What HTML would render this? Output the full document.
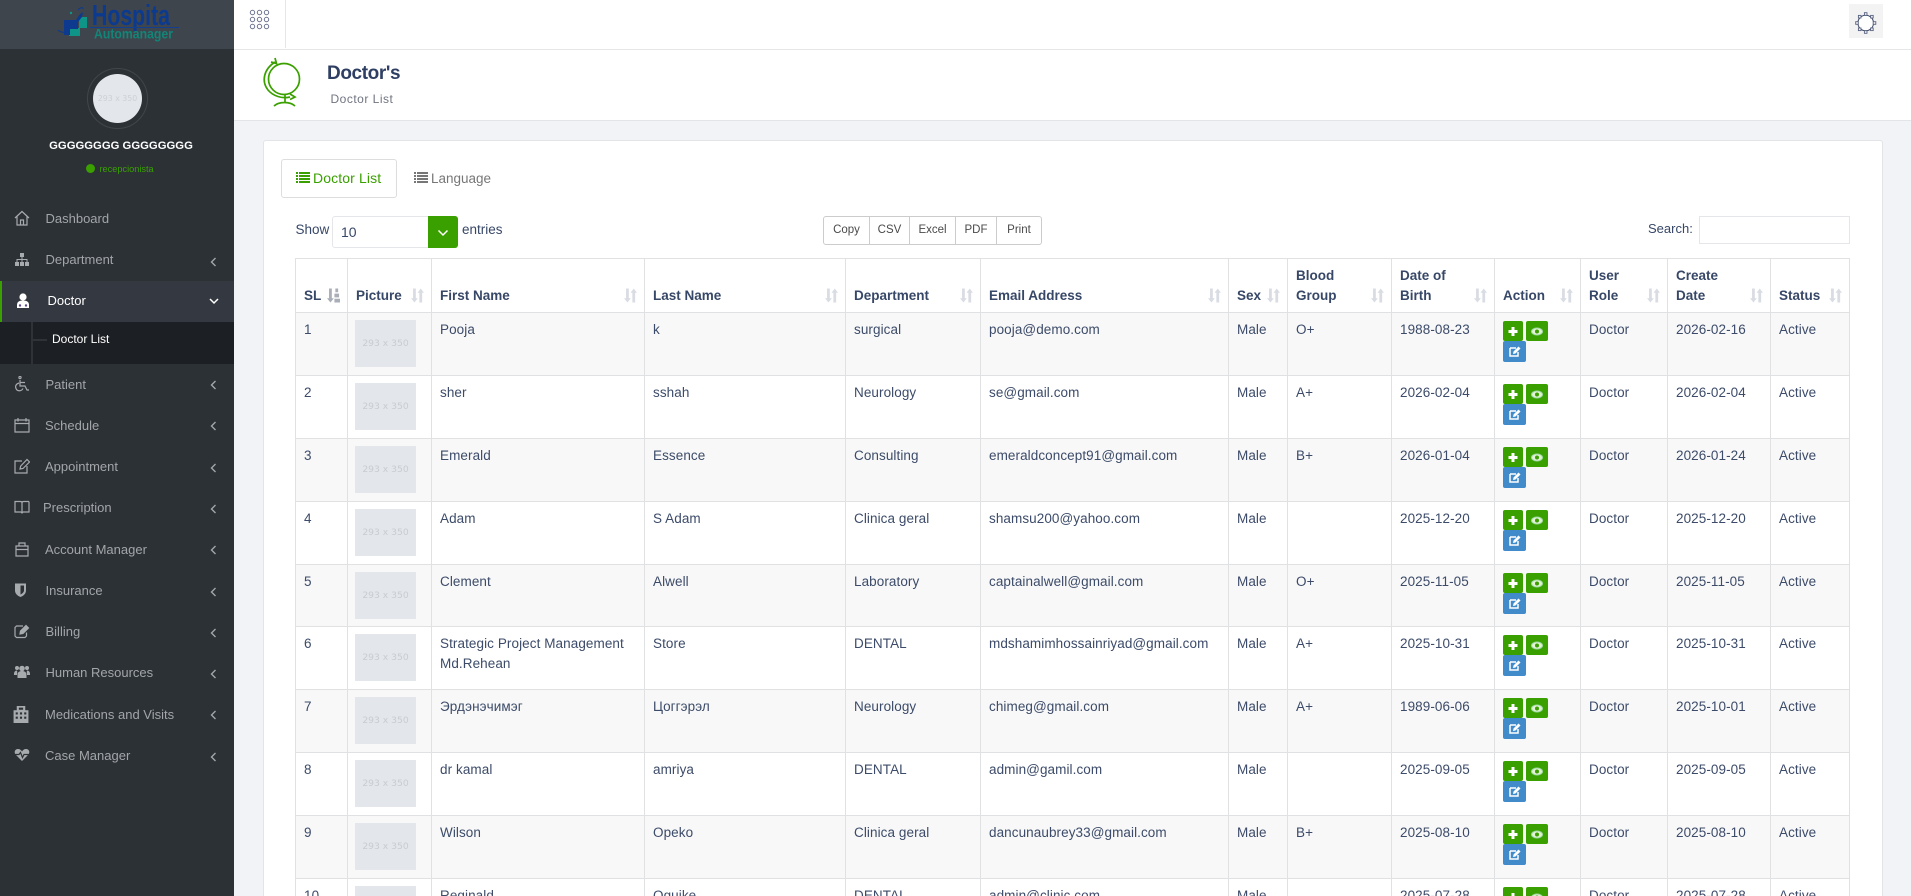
<!DOCTYPE html>
<html lang="en"><head><meta charset="utf-8"><title>Doctor List</title>
<style>
*{box-sizing:border-box}
html,body{margin:0;padding:0;width:1911px;height:896px;overflow:hidden;background:#f1f3f6;font-family:"Liberation Sans",sans-serif;color:#374767}
#w{position:relative;width:1911px;height:896px;overflow:hidden;background:#f1f3f6}
.a{position:absolute}
#side{position:absolute;left:0;top:0;width:234px;height:896px;background:#2c3136}
#logo{position:absolute;left:0;top:0;width:234px;height:49px;background:#3f454c}
.mi{position:absolute;height:20px;line-height:20px;font-size:13px;color:#a3a6a9;white-space:nowrap}
.ic{position:absolute;left:14px;width:16px;height:16px;fill:none;stroke:#a8abae;stroke-width:1.2}
.ic.f{fill:#a8abae;stroke:none}
.ch{position:absolute;left:210px;width:7px;height:10px;fill:none;stroke:#a3a6a9;stroke-width:1.4}
#tb{position:absolute;left:234px;top:0;width:1677px;height:50px;background:#fff;border-bottom:1px solid #e5e6e8}
#ch{position:absolute;left:234px;top:50px;width:1677px;height:71px;background:#fff;border-bottom:1px solid #e2e4e8}
#card{position:absolute;left:263px;top:140px;width:1620px;height:756px;background:#fff;border:1px solid #e2e4e7;border-bottom:0;border-radius:3px 3px 0 0}
.btn{position:absolute;top:216px;height:29px;line-height:27px;border:1px solid #ccc;border-left:0;background:#fff;text-align:center;font-size:11.5px;color:#4a4a4a}
table{position:absolute;left:295px;top:258px;border-collapse:separate;border-spacing:0;table-layout:fixed;width:1554px;border-left:1px solid #e0e1e3;border-top:1px solid #e0e1e3;font-size:13.5px;line-height:19.5px;color:#3c4b69}
th,td{border-right:1px solid #e0e1e3;border-bottom:1px solid #e0e1e3;padding:7px 7px 0 8px;vertical-align:top;text-align:left;position:relative;overflow:visible}
td{letter-spacing:.08px}
thead tr{height:54px}
th{vertical-align:bottom;padding-bottom:7px;padding-top:0;font-weight:bold;color:#374767}
tbody tr{height:63px}
tbody tr.x{height:62px}
tbody tr.y{height:18px}
tr.y td{height:18px;overflow:hidden;border-bottom:0}
tr.y td div{height:11px;overflow:hidden}
tbody tr:nth-child(odd) td{background:#f8f8f8}
.s{position:absolute;right:7px;bottom:9px;width:13px;height:15px;fill:#d9dde3}
.ph{display:block;position:absolute;left:7px;top:7px;width:61px;height:47px;background:#e3e6ea;color:#c8ccd2;font:9.2px/47px "DejaVu Sans",sans-serif;letter-spacing:0;text-align:center;overflow:hidden}
.ba{position:absolute;left:8px;top:7.5px;width:20px;height:20px;background:#3aa000;border-radius:2px}
.bb{position:absolute;left:31px;top:7.5px;width:22px;height:20px;background:#3aa000;border-radius:2px}
.bc{position:absolute;left:8px;top:28px;width:23px;height:21px;background:#428bca;border-radius:2px}
.ba svg,.bb svg,.bc svg{position:absolute;left:0;top:0}
</style></head><body>
<div id="w">
<svg width="0" height="0" style="position:absolute"><defs>
<g id="so"><path d="M2.200 0h3v10.500h2.200L3.700 15 0 10.500h2.200z"/><path d="M9 15h3V4.500h2L10.500 0 7 4.500h2z"/></g>
<g id="pl"><path d="M8.500 6h3v3h3v3h-3v3h-3v-3h-3V9h3z" fill="#fff"/></g>
<g id="ey"><ellipse cx="11" cy="10.500" rx="5.500" ry="3.500" fill="#e4f3d5" stroke="#9fd9a5"/><circle cx="11" cy="10.500" r="2" fill="#3aa000"/></g>
<g id="ed"><path d="M7 7h6M7 7v8h8v-4" fill="none" stroke="#fff" stroke-width="1.500"/><path d="M10 13l.5-2.500 5-5 2 2-5 5z" fill="#fff"/></g>
<path id="cl" d="M5.500 1L1.500 5l4 4"/>
</defs></svg>

<div id="side">
<div id="logo"><svg width="234" height="49" viewBox="0 0 234 49">
<path d="M79 17h8v11h-7v8H69v-8h10z" fill="#0f9488"/>
<path d="M64 20h12l4-6 3-2-1 5-4 5v7H70v6h-6z" fill="#0d3a8e"/>
<path d="M58 30c3 3 8 3 11 1" fill="none" stroke="#0d3a8e" stroke-width="1"/>
<path d="M78 10c3-3 5-3 5-1" fill="none" stroke="#0d3a8e" stroke-width="1"/>
<circle cx="71" cy="13" r="1.200" fill="#0f9488"/>
<text x="92" y="25" font-family="Liberation Sans,sans-serif" font-weight="bold" font-size="29" fill="#0c3a8e" textLength="78" lengthAdjust="spacingAndGlyphs">Hospita</text>
<rect x="90" y="27" width="89" height="1" fill="#123f8e"/>
<text x="94" y="38.500" font-family="Liberation Sans,sans-serif" font-size="14" font-weight="bold" fill="#128578" textLength="79" lengthAdjust="spacingAndGlyphs">Automanager</text>
</svg></div>

<div class="a" style="left:87px;top:68px;width:61px;height:61px;border-radius:50%;border:1px solid #41464b"></div>
<div class="a" style="left:93px;top:74px;width:49px;height:49px;border-radius:50%;background:#e3e6ea;color:#cdd1d7;font:7.8px/49px 'DejaVu Sans',sans-serif;text-align:center;white-space:nowrap">293 x 350</div>
<div class="a" style="left:4px;width:234px;top:137px;text-align:center;font-weight:bold;color:#fff;font-size:11.300px;line-height:18px;white-space:nowrap">GGGGGGGG GGGGGGGG</div>
<div class="a" style="left:86px;top:164px;width:9px;height:9px;border-radius:50%;background:#3aa000"></div>
<div class="a" style="left:99.500px;top:162px;color:#3aa000;font-size:9.200px;line-height:14px">recepcionista</div>

<div class="mi" style="left:45.500px;top:209px">Dashboard</div>
<svg class="ic" style="top:210px" viewBox="0 0 16 16"><path d="M1 8L8 1.500 15 8M3 6.500V15h10V6.500M6.500 15v-5h3v5"/></svg>

<div class="mi" style="left:45.500px;top:250px">Department</div>
<svg class="ic f" style="top:252px" viewBox="0 0 16 16"><path d="M6 1h4v4H8.500v2H13.500v3H15v4h-4v-4h1.500V8h-4v2H10v4H6v-4h1.500V8h-4v2H5v4H1v-4h1.500V7h5V5H6z"/></svg>
<svg class="ch" style="top:257px" viewBox="0 0 7 10"><use href="#cl"/></svg>

<div class="a" style="left:0;top:281px;width:234px;height:41px;background:#343840;border-left:2px solid #3aa000"></div>
<div class="mi" style="left:47.500px;top:291px;color:#fff;font-size:13px">Doctor</div>
<svg class="ic f" style="top:293px;left:15px;fill:#fff" viewBox="0 0 14 16"><circle cx="7" cy="4" r="3.600"/><path d="M1 15v-3c0-3 2-4.500 6-4.500s6 1.500 6 4.500v3z"/><circle cx="4" cy="12.500" r="1.200" fill="#5b4a90"/><circle cx="10" cy="12.500" r="1.200" fill="#5b4a90"/></svg>
<svg class="a" style="left:209px;top:298px;fill:none;stroke:#fff;stroke-width:1.500" width="10" height="7" viewBox="0 0 10 7"><path d="M1 1l4 4 4-4"/></svg>

<div class="a" style="left:0;top:322px;width:234px;height:42px;background:#1c1f23"></div>
<div class="a" style="left:31px;top:322px;width:2px;height:42px;background:#2f3338"></div>
<div class="a" style="left:32px;top:339px;width:15px;height:2px;background:#2f3338"></div>
<div class="mi" style="left:52px;top:329px;color:#fff;font-size:12px">Doctor List</div>

<div class="mi" style="left:45.500px;top:375px">Patient</div>
<svg class="ic" style="top:376px" viewBox="0 0 16 16"><circle cx="6" cy="1.500" r="1.100"/><path d="M6 4v6h5l2 4h2M5 7c-3 1-4 3-3 5.500S7 16 9 12.500M6 6.500h5"/></svg>
<svg class="ch" style="top:380px" viewBox="0 0 7 10"><use href="#cl"/></svg>

<div class="mi" style="left:45px;top:416px">Schedule</div>
<svg class="ic" style="top:417px" viewBox="0 0 16 16"><path d="M1 3h14v12H1zM1 6.500h14M4 1v3.500M12 1v3.500"/></svg>
<svg class="ch" style="top:421px" viewBox="0 0 7 10"><use href="#cl"/></svg>

<div class="mi" style="left:45px;top:457px">Appointment</div>
<svg class="ic" style="top:458px" viewBox="0 0 16 16"><path d="M8 3H1v12h12V8M6 11l.7-3L13 1.500l2.500 2.500L9 10.500z"/></svg>
<svg class="ch" style="top:463px" viewBox="0 0 7 10"><use href="#cl"/></svg>

<div class="mi" style="left:43px;top:498px">Prescription</div>
<svg class="ic" style="top:499px" viewBox="0 0 16 16"><path d="M1 2.500h5.500c1 0 1.500.5 1.500 1.500v10.500c0-1-.5-1.500-1.500-1.500H1zM15 2.500H9.500c-1 0-1.500.5-1.500 1.500M15 2.500V13H9.500c-1 0-1.500.5-1.500 1.500"/></svg>
<svg class="ch" style="top:504px" viewBox="0 0 7 10"><use href="#cl"/></svg>

<div class="mi" style="left:45px;top:540px">Account Manager</div>
<svg class="ic" style="top:541px" viewBox="0 0 16 16"><path d="M2 5h12v10H2zM2 8.500h12M5 5V2h6v3"/></svg>
<svg class="ch" style="top:545px" viewBox="0 0 7 10"><use href="#cl"/></svg>

<div class="mi" style="left:45.500px;top:581px">Insurance</div>
<svg class="ic f" style="top:582px;left:13px" viewBox="0 0 16 16"><path d="M2 1.500h11v7c0 3-2.500 5.500-5.500 6.500C4.500 14 2 11.500 2 8.500z"/><path d="M7.500 3.500h3.500v5c0 1.500-1.500 3-3.500 4z" fill="#2c3136"/></svg>
<svg class="ch" style="top:587px" viewBox="0 0 7 10"><use href="#cl"/></svg>

<div class="mi" style="left:45.500px;top:622px">Billing</div>
<svg class="ic" style="top:623px" viewBox="0 0 16 16"><path d="M9 3H2.500L1 4.500V13l1.500 1.500H11L12.500 13V9.500"/><path d="M6 11l.5-3L12 2.500 14.500 5 9 10.500z" fill="#a8abae"/></svg>
<svg class="ch" style="top:628px" viewBox="0 0 7 10"><use href="#cl"/></svg>

<div class="mi" style="left:45.500px;top:663px">Human Resources</div>
<svg class="ic f" style="top:664px;width:16px" viewBox="0 0 16 16"><circle cx="3" cy="4" r="2"/><circle cx="13" cy="4" r="2"/><circle cx="8" cy="4.500" r="2.800"/><path d="M0 10c0-2 1-3.500 3-3.500 0 0 .5 1 0 4.500H0zM16 10c0-2-1-3.500-3-3.500 0 0-.5 1 0 4.500h3zM3.500 14v-3c0-3 2-4 4.500-4s4.500 1 4.500 4v3z"/></svg>
<svg class="ch" style="top:669px" viewBox="0 0 7 10"><use href="#cl"/></svg>

<div class="mi" style="left:45px;top:705px">Medications and Visits</div>
<svg class="ic f" style="top:706px;left:13px;height:17px" viewBox="0 0 14 16"><path d="M3 0h8v4h3v12H0V4h3z"/><path d="M2 6h2v2H2zM6 6h2v2H6zM10 6h2v2h-2zM2 10h2v2H2zM6 10h2v2H6zM10 10h2v2h-2zM5 1.500h4v2H5z" fill="#2c3136"/></svg>
<svg class="ch" style="top:710px" viewBox="0 0 7 10"><use href="#cl"/></svg>

<div class="mi" style="left:45px;top:746px">Case Manager</div>
<svg class="ic f" style="top:747px" viewBox="0 0 16 16"><path d="M8 14L1.500 7.500C0 5.500.5 2 4 2c2 0 3 1 4 2.500C9 3 10 2 12 2c3.500 0 4 3.500 2.500 5.500z"/><path d="M1 7.500h4l1.500-2 2 5 1.500-3h5" fill="none" stroke="#2c3136" stroke-width="1.200"/></svg>
<svg class="ch" style="top:752px" viewBox="0 0 7 10"><use href="#cl"/></svg>
</div>

<div id="tb"></div>
<div class="a" style="left:285px;top:0;width:1px;height:48px;background:#e5e6e8"></div>
<svg class="a" style="left:249px;top:9px" width="22" height="21" viewBox="0 0 22 21" fill="none" stroke="#6d7290" stroke-width="1"><circle cx="3.500" cy="3.500" r="2.200"/><circle cx="10.500" cy="3.500" r="2.200"/><circle cx="17.500" cy="3.500" r="2.200"/><circle cx="3.500" cy="10.500" r="2.200"/><circle cx="10.500" cy="10.500" r="2.200"/><circle cx="17.500" cy="10.500" r="2.200"/><circle cx="3.500" cy="17.500" r="2.200"/><circle cx="10.500" cy="17.500" r="2.200"/><circle cx="17.500" cy="17.500" r="2.200"/></svg>
<div class="a" style="left:1849px;top:4px;width:34px;height:34px;background:#f3f3f3"></div>
<svg class="a" style="left:1849px;top:4px" width="34" height="34" viewBox="0 0 34 34" fill="#f3f3f3" stroke="#5a6383" stroke-width=".9"><circle cx="16.700" cy="19" r="7.800" fill="#fff" stroke="#3f4a66" stroke-width="1"/><rect x="15.400" y="8.700" width="2.600" height="2.600"/><rect x="15.400" y="26.700" width="2.600" height="2.600"/><rect x="6.700" y="17.700" width="2.600" height="2.600"/><rect x="24.200" y="17.700" width="2.600" height="2.600"/><rect x="9.400" y="11.400" width="2.600" height="2.600"/><rect x="21.600" y="11.400" width="2.600" height="2.600"/><rect x="9.400" y="24" width="2.600" height="2.600"/><rect x="21.600" y="24" width="2.600" height="2.600"/></svg>

<div id="ch"></div>
<svg class="a" style="left:261px;top:57px" width="42" height="51" viewBox="0 0 42 51" fill="none" stroke="#3aa000" stroke-width="1.700"><circle cx="23" cy="22" r="15.500"/><path d="M14 5C3 12 0 24 7 33c5 6 14 9 22 7"/><path d="M14 1l1.500 5.500L10 5M29 37l5 3-5 2.500" /><path d="M24 38v8M13 49c3-3 7-3.500 10.500-3.500S31 46 34 49"/></svg>
<div class="a" style="left:327px;top:61px;font-size:19px;line-height:26px;font-weight:bold;color:#2f3f63;letter-spacing:-.4px">Doctor's</div>
<div class="a" style="left:330.500px;top:91px;font-size:12px;line-height:16px;color:#6f7480;letter-spacing:.5px">Doctor List</div>

<div id="card"></div>
<div class="a" style="left:281px;top:159px;width:116px;height:39px;border:1px solid #ddd;border-radius:3px"></div>
<svg class="a" style="left:296px;top:172px" width="14" height="11" viewBox="0 0 14 11" fill="#3aa000"><path d="M0 0h2v2H0zM3 0h11v2H3zM0 3h2v2H0zM3 3h11v2H3zM0 6h2v2H0zM3 6h11v2H3zM0 9h2v2H0zM3 9h11v2H3z"/></svg>
<div class="a" style="left:313px;top:168px;font-size:14px;line-height:20px;color:#3aa000;letter-spacing:.12px">Doctor List</div>
<svg class="a" style="left:414px;top:172px" width="14" height="11" viewBox="0 0 14 11" fill="#777"><path d="M0 0h2v2H0zM3 0h11v2H3zM0 3h2v2H0zM3 3h11v2H3zM0 6h2v2H0zM3 6h11v2H3zM0 9h2v2H0zM3 9h11v2H3z"/></svg>
<div class="a" style="left:431px;top:169px;font-size:13.500px;line-height:20px;color:#777">Language</div>

<div class="a" style="left:295.500px;top:220px;font-size:13.500px;line-height:20px">Show</div>
<div class="a" style="left:332px;top:216px;width:126px;height:32px;border:1px solid #e4e6e9;border-radius:3px;font-size:14px;line-height:31px;padding-left:8px">10</div>
<div class="a" style="left:428px;top:216px;width:30px;height:32px;background:#3aa000;border-radius:0 3px 3px 0"></div>
<svg class="a" style="left:437px;top:229px;fill:none;stroke:#fff;stroke-width:1.500" width="12" height="8" viewBox="0 0 12 8"><path d="M1.500 1.500L6 6l4.500-4.500"/></svg>
<div class="a" style="left:462px;top:220px;font-size:13.500px;line-height:20px">entries</div>

<div class="btn" style="left:823px;width:47px;border-left:1px solid #ccc;border-radius:3px 0 0 3px">Copy</div>
<div class="btn" style="left:870px;width:40px">CSV</div>
<div class="btn" style="left:910px;width:46px">Excel</div>
<div class="btn" style="left:956px;width:41px">PDF</div>
<div class="btn" style="left:997px;width:45px;border-radius:0 3px 3px 0">Print</div>

<div class="a" style="left:1648px;top:219px;font-size:13px;line-height:20px">Search:</div>
<div class="a" style="left:1699px;top:216px;width:151px;height:28px;border:1px solid #e4e6e9"></div>

<table>
<colgroup><col style="width:52px"><col style="width:84px"><col style="width:213px"><col style="width:201px"><col style="width:135px"><col style="width:248px"><col style="width:59px"><col style="width:104px"><col style="width:103px"><col style="width:86px"><col style="width:87px"><col style="width:103px"><col style="width:79px"></colgroup>
<thead><tr>
<th>SL<svg class="s" viewBox="0 0 14 15" style="fill:#a9aeb7"><path d="M2.200 0h3v10.500h2.200L3.700 15 0 10.500h2.200z"/><path d="M9 0h3v4H9zM8 5.500h5v4H8zM8 11h6v4H8z"/></svg></th>
<th>Picture<svg class="s" viewBox="0 0 14 15"><use href="#so"/></svg></th>
<th>First Name<svg class="s" viewBox="0 0 14 15"><use href="#so"/></svg></th>
<th>Last Name<svg class="s" viewBox="0 0 14 15"><use href="#so"/></svg></th>
<th>Department<svg class="s" viewBox="0 0 14 15"><use href="#so"/></svg></th>
<th>Email Address<svg class="s" viewBox="0 0 14 15"><use href="#so"/></svg></th>
<th>Sex<svg class="s" viewBox="0 0 14 15"><use href="#so"/></svg></th>
<th>Blood<br>Group<svg class="s" viewBox="0 0 14 15"><use href="#so"/></svg></th>
<th>Date of<br>Birth<svg class="s" viewBox="0 0 14 15"><use href="#so"/></svg></th>
<th>Action<svg class="s" viewBox="0 0 14 15"><use href="#so"/></svg></th>
<th>User<br>Role<svg class="s" viewBox="0 0 14 15"><use href="#so"/></svg></th>
<th>Create<br>Date<svg class="s" viewBox="0 0 14 15"><use href="#so"/></svg></th>
<th>Status<svg class="s" viewBox="0 0 14 15"><use href="#so"/></svg></th>
</tr></thead>
<tbody>
<tr><td>1</td><td><span class="ph">293 x 350</span></td><td>Pooja</td><td>k</td><td>surgical</td><td>pooja@demo.com</td><td>Male</td><td>O+</td><td>1988-08-23</td><td><span class="ba"><svg width="20" height="20"><use href="#pl"/></svg></span><span class="bb"><svg width="22" height="20"><use href="#ey"/></svg></span><span class="bc"><svg width="23" height="21"><use href="#ed"/></svg></span></td><td>Doctor</td><td>2026-02-16</td><td>Active</td></tr>
<tr><td>2</td><td><span class="ph">293 x 350</span></td><td>sher</td><td>sshah</td><td>Neurology</td><td>se@gmail.com</td><td>Male</td><td>A+</td><td>2026-02-04</td><td><span class="ba"><svg width="20" height="20"><use href="#pl"/></svg></span><span class="bb"><svg width="22" height="20"><use href="#ey"/></svg></span><span class="bc"><svg width="23" height="21"><use href="#ed"/></svg></span></td><td>Doctor</td><td>2026-02-04</td><td>Active</td></tr>
<tr><td>3</td><td><span class="ph">293 x 350</span></td><td>Emerald</td><td>Essence</td><td>Consulting</td><td>emeraldconcept91@gmail.com</td><td>Male</td><td>B+</td><td>2026-01-04</td><td><span class="ba"><svg width="20" height="20"><use href="#pl"/></svg></span><span class="bb"><svg width="22" height="20"><use href="#ey"/></svg></span><span class="bc"><svg width="23" height="21"><use href="#ed"/></svg></span></td><td>Doctor</td><td>2026-01-24</td><td>Active</td></tr>
<tr><td>4</td><td><span class="ph">293 x 350</span></td><td>Adam</td><td>S Adam</td><td>Clinica geral</td><td>shamsu200@yahoo.com</td><td>Male</td><td></td><td>2025-12-20</td><td><span class="ba"><svg width="20" height="20"><use href="#pl"/></svg></span><span class="bb"><svg width="22" height="20"><use href="#ey"/></svg></span><span class="bc"><svg width="23" height="21"><use href="#ed"/></svg></span></td><td>Doctor</td><td>2025-12-20</td><td>Active</td></tr>
<tr class="x"><td>5</td><td><span class="ph">293 x 350</span></td><td>Clement</td><td>Alwell</td><td>Laboratory</td><td>captainalwell@gmail.com</td><td>Male</td><td>O+</td><td>2025-11-05</td><td><span class="ba"><svg width="20" height="20"><use href="#pl"/></svg></span><span class="bb"><svg width="22" height="20"><use href="#ey"/></svg></span><span class="bc"><svg width="23" height="21"><use href="#ed"/></svg></span></td><td>Doctor</td><td>2025-11-05</td><td>Active</td></tr>
<tr><td>6</td><td><span class="ph">293 x 350</span></td><td>Strategic Project Management Md.Rehean</td><td>Store</td><td>DENTAL</td><td>mdshamimhossainriyad@gmail.com</td><td>Male</td><td>A+</td><td>2025-10-31</td><td><span class="ba"><svg width="20" height="20"><use href="#pl"/></svg></span><span class="bb"><svg width="22" height="20"><use href="#ey"/></svg></span><span class="bc"><svg width="23" height="21"><use href="#ed"/></svg></span></td><td>Doctor</td><td>2025-10-31</td><td>Active</td></tr>
<tr><td>7</td><td><span class="ph">293 x 350</span></td><td>Эрдэнэчимэг</td><td>Цоггэрэл</td><td>Neurology</td><td>chimeg@gmail.com</td><td>Male</td><td>A+</td><td>1989-06-06</td><td><span class="ba"><svg width="20" height="20"><use href="#pl"/></svg></span><span class="bb"><svg width="22" height="20"><use href="#ey"/></svg></span><span class="bc"><svg width="23" height="21"><use href="#ed"/></svg></span></td><td>Doctor</td><td>2025-10-01</td><td>Active</td></tr>
<tr><td>8</td><td><span class="ph">293 x 350</span></td><td>dr kamal</td><td>amriya</td><td>DENTAL</td><td>admin@gamil.com</td><td>Male</td><td></td><td>2025-09-05</td><td><span class="ba"><svg width="20" height="20"><use href="#pl"/></svg></span><span class="bb"><svg width="22" height="20"><use href="#ey"/></svg></span><span class="bc"><svg width="23" height="21"><use href="#ed"/></svg></span></td><td>Doctor</td><td>2025-09-05</td><td>Active</td></tr>
<tr><td>9</td><td><span class="ph">293 x 350</span></td><td>Wilson</td><td>Opeko</td><td>Clinica geral</td><td>dancunaubrey33@gmail.com</td><td>Male</td><td>B+</td><td>2025-08-10</td><td><span class="ba"><svg width="20" height="20"><use href="#pl"/></svg></span><span class="bb"><svg width="22" height="20"><use href="#ey"/></svg></span><span class="bc"><svg width="23" height="21"><use href="#ed"/></svg></span></td><td>Doctor</td><td>2025-08-10</td><td>Active</td></tr>
<tr class="y"><td><div>10</div></td><td><span class="ph">293 x 350</span></td><td><div>Reginald</div></td><td><div>Oguike</div></td><td><div>DENTAL</div></td><td><div>admin@clinic.com</div></td><td><div>Male</div></td><td></td><td><div>2025-07-28</div></td><td><span class="ba"><svg width="20" height="20"><use href="#pl"/></svg></span><span class="bb"><svg width="22" height="20"><use href="#ey"/></svg></span></td><td><div>Doctor</div></td><td><div>2025-07-28</div></td><td><div>Active</div></td></tr>
</tbody></table>
</div>
</body></html>
